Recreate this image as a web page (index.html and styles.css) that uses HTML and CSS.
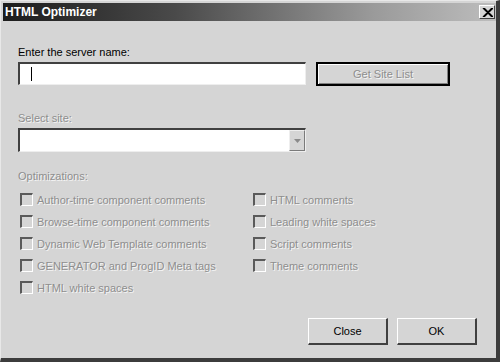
FILE: index.html
```html
<!DOCTYPE html>
<html lang="en">
<head>
    <meta charset="UTF-8">
    <title>HTML Optimizer</title>
    <link rel="stylesheet" href="styles.css">
</head>
<body>
    <div class="window">
        <div class="titlebar">
            <span class="title">HTML Optimizer</span>
            <span class="close-box">
                <svg width="11" height="9" viewBox="0 0 11 9">
                    <path d="M1 0 L10 9 M2 0 L11 9 M10 0 L1 9 M11 0 L2 9" stroke="#000" stroke-width="1.3"/>
                </svg>
            </span>
        </div>

        <div class="content">
            <div class="label">Enter the server name:</div>
            <div class="row">
                <div class="textbox"><span class="caret"></span></div>
                <div class="button default disabled">Get Site List</div>
            </div>

            <div class="label disabled-text spaced">Select site:</div>
            <div class="select">
                <div class="drop">
                    <svg width="7" height="4" viewBox="0 0 7 4"><path d="M0 0 H7 L3.5 4 Z" fill="#8a8a8a"/></svg>
                </div>
            </div>

            <div class="label disabled-text spaced-lg">Optimizations:</div>
            <div class="options">
                <div class="col">
                    <div class="check"><span class="box"></span>Author-time component comments</div>
                    <div class="check"><span class="box"></span>Browse-time component comments</div>
                    <div class="check"><span class="box"></span>Dynamic Web Template comments</div>
                    <div class="check"><span class="box"></span>GENERATOR and ProgID Meta tags</div>
                    <div class="check"><span class="box"></span>HTML white spaces</div>
                </div>
                <div class="col">
                    <div class="check"><span class="box"></span>HTML comments</div>
                    <div class="check"><span class="box"></span>Leading white spaces</div>
                    <div class="check"><span class="box"></span>Script comments</div>
                    <div class="check"><span class="box"></span>Theme comments</div>
                </div>
            </div>

            <div class="actions">
                <div class="button">Close</div>
                <div class="button">OK</div>
            </div>
        </div>
    </div>
</body>
</html>
```

FILE: styles.css
```css
:root {
    --face: #d5d5d5;
    --shadow: #808080;
    --dark: #404040;
    --light: #ffffff;
    --muted: #8e8e8e;
}

* {
    margin: 0;
    padding: 0;
    box-sizing: border-box;
}

body {
    font-family: "Liberation Sans", Arial, sans-serif;
    font-size: 11px;
    color: #000;
    background: var(--face);
}

.window {
    width: 500px;
    height: 362px;
    display: flex;
    flex-direction: column;
    background: var(--face);
    border-top: 1px solid #e8e8e8;
    border-left: 1px solid #e8e8e8;
    border-right: 4px solid #3c3c3c;
    border-bottom: 4px solid #3c3c3c;
    padding: 2px 0 0 2px;
}

.titlebar {
    height: 18px;
    display: flex;
    align-items: center;
    justify-content: space-between;
    padding: 0 1px 0 2px;
    background: linear-gradient(to right, #1c1c1c 0%, #4a4a4a 35%, #9a9a9a 75%, #bdbdbd 100%);
}

.title {
    color: #fff;
    font-weight: bold;
    font-size: 12px;
}

.close-box {
    width: 16px;
    height: 14px;
    display: flex;
    align-items: center;
    justify-content: center;
    background: var(--face);
    border-top: 1px solid var(--light);
    border-left: 1px solid var(--light);
    border-right: 1px solid var(--dark);
    border-bottom: 1px solid var(--dark);
}

.content {
    flex: 1;
    display: flex;
    flex-direction: column;
    padding: 24px 0 0 15px;
}

.label {
    height: 15px;
    line-height: 15px;
}

.spaced {
    margin-top: 25px;
}

.spaced-lg {
    margin-top: 17px;
}

.disabled-text {
    color: var(--muted);
    text-shadow: 1px 1px 0 #f4f4f4;
}

.row {
    display: flex;
    margin-top: 2px;
}

.textbox {
    width: 288px;
    height: 23px;
    background: #fff;
    border-top: 2px solid #404040;
    border-left: 2px solid #404040;
    border-right: 1px solid #eeeeee;
    border-bottom: 1px solid #eeeeee;
    padding: 3px 0 0 11px;
}

.caret {
    display: block;
    width: 1px;
    height: 14px;
    background: #000;
}

.button {
    width: 80px;
    height: 27px;
    display: flex;
    align-items: center;
    justify-content: center;
    background: var(--face);
    border-top: 1px solid var(--light);
    border-left: 1px solid var(--light);
    border-right: 2px solid var(--dark);
    border-bottom: 2px solid var(--dark);
}

.button.default {
    width: 134px;
    height: 24px;
    margin-left: 10px;
    border: 2px solid #000;
    box-shadow: inset 1px 1px 0 var(--light), inset -1px -1px 0 var(--shadow);
}

.button.disabled {
    color: var(--muted);
    text-shadow: 1px 1px 0 #f4f4f4;
}

.select {
    width: 288px;
    height: 24px;
    margin-top: 2px;
    display: flex;
    justify-content: flex-end;
    background: #fff;
    border-top: 2px solid #404040;
    border-left: 2px solid #404040;
    border-right: 1px solid #eeeeee;
    border-bottom: 1px solid #eeeeee;
}

.drop {
    width: 16px;
    display: flex;
    align-items: center;
    justify-content: center;
    background: var(--face);
    border-top: 1px solid #eeeeee;
    border-left: 1px solid #eeeeee;
    border-right: 1px solid #7a7a7a;
    border-bottom: 1px solid #7a7a7a;
}

.options {
    display: flex;
    margin-top: 9px;
    padding-left: 2px;
}

.col {
    display: flex;
    flex-direction: column;
    gap: 9px;
}

.col:first-child {
    width: 233px;
}

.check {
    height: 13px;
    display: flex;
    align-items: center;
    color: var(--muted);
    text-shadow: 1px 1px 0 #f4f4f4;
    white-space: nowrap;
}

.box {
    width: 13px;
    height: 13px;
    margin-right: 4px;
    flex-shrink: 0;
    border-top: 2px solid #5a5a5a;
    border-left: 2px solid #5a5a5a;
    border-right: 1px solid var(--light);
    border-bottom: 1px solid var(--light);
    background: var(--face);
}

.actions {
    display: flex;
    justify-content: flex-end;
    gap: 9px;
    margin-top: auto;
    padding: 0 19px 13px 0;
}
```
